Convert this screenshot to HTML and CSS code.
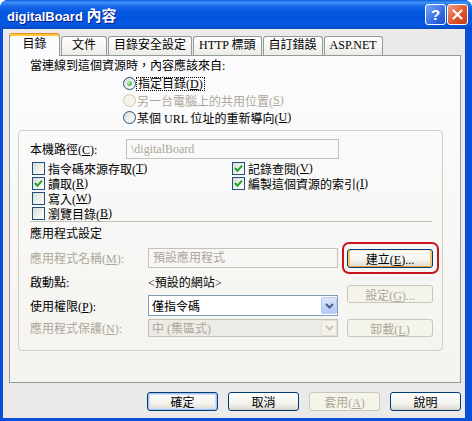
FILE: index.html
```html
<!DOCTYPE html>
<html>
  <head>
    <title>digitalBoard 內容</title>
    <link rel="stylesheet" href="styles.css">
  </head>
  <body>
    <div class="window">
      <div class="titlebar">
        <span class="title">digitalBoard <span class="title-cjk">內容</span></span>
        <div class="caption-btns">
          <span class="cap-btn help">?</span>
          <span class="cap-btn close">
            <svg width="11" height="11" viewBox="0 0 11 11"><path d="M1.5 1.5 L9.5 9.5 M9.5 1.5 L1.5 9.5" stroke="#fff" stroke-width="2.2" stroke-linecap="round"/></svg>
          </span>
        </div>
      </div>

      <div class="client">
        <!-- tabs -->
        <div class="tabs">
          <div class="tab active">目錄</div>
          <div class="tab">文件</div>
          <div class="tab">目錄安全設定</div>
          <div class="tab">HTTP 標頭</div>
          <div class="tab">自訂錯誤</div>
          <div class="tab">ASP.NET</div>
        </div>

        <div class="panel">
          <div class="intro">當連線到這個資源時，內容應該來自:</div>
          <div class="radios">
            <div class="radio-row"><span class="radio on"></span><span class="focus">指定目錄(<u>D</u>)</span></div>
            <div class="radio-row dis"><span class="radio off"></span>另一台電腦上的共用位置(<u>S</u>)</div>
            <div class="radio-row"><span class="radio"></span>某個 URL 位址的重新導向(<u>U</u>)</div>
          </div>

          <!-- local path group -->
          <div class="group">
            <div class="path-row">
              <span class="lbl">本機路徑(<u>C</u>):</span>
              <div class="field dis-field path-field">\digitalBoard</div>
            </div>

            <div class="checks">
              <div class="chk-row"><span class="chk"></span>指令碼來源存取(<u>T</u>)</div>
              <div class="chk-row"><span class="chk"><svg width="9" height="9" viewBox="0 0 9 9"><path d="M1 4 L3.5 6.8 L8 1.6" fill="none" stroke="#21a121" stroke-width="2"/></svg></span>記錄查閱(<u>V</u>)</div>
              <div class="chk-row"><span class="chk"><svg width="9" height="9" viewBox="0 0 9 9"><path d="M1 4 L3.5 6.8 L8 1.6" fill="none" stroke="#21a121" stroke-width="2"/></svg></span>讀取(<u>R</u>)</div>
              <div class="chk-row"><span class="chk"><svg width="9" height="9" viewBox="0 0 9 9"><path d="M1 4 L3.5 6.8 L8 1.6" fill="none" stroke="#21a121" stroke-width="2"/></svg></span>編製這個資源的索引(<u>I</u>)</div>
              <div class="chk-row"><span class="chk"></span>寫入(<u>W</u>)</div>
              <div></div>
              <div class="chk-row"><span class="chk"></span>瀏覽目錄(<u>B</u>)</div>
            </div>

            <div class="sep"></div>
            <div class="section-title">應用程式設定</div>

            <div class="app">
              <div class="app-grid">
                <span class="lbl dis">應用程式名稱(<u>M</u>):</span>
                <div class="field dis-field">預設應用程式</div>

                <span class="lbl">啟動點:</span>
                <span class="lbl">&lt;預設的網站&gt;</span>

                <span class="lbl">使用權限(<u>P</u>):</span>
                <div class="combo">
                  <span>僅指令碼</span>
                  <span class="arrow"><svg width="9" height="6" viewBox="0 0 9 6"><path d="M1 1 L4.5 4.5 L8 1" fill="none" stroke="#4d6185" stroke-width="2"/></svg></span>
                </div>

                <span class="lbl dis">應用程式保護(<u>N</u>):</span>
                <div class="combo dis-combo">
                  <span>中 (集區式)</span>
                  <span class="arrow"><svg width="9" height="6" viewBox="0 0 9 6"><path d="M1 1 L4.5 4.5 L8 1" fill="none" stroke="#c9c7ba" stroke-width="2"/></svg></span>
                </div>
              </div>

              <div class="app-btns">
                <div class="create-wrap"><button class="btn side-btn create">建立(<u>E</u>)...</button></div>
                <button class="btn side-btn set-btn" disabled>設定(<u>G</u>)...</button>
                <button class="btn side-btn unload-btn" disabled>卸載(<u>L</u>)</button>
              </div>
            </div>
          </div>
        </div>

        <div class="footer">
          <button class="btn default">確定</button>
          <button class="btn">取消</button>
          <button class="btn" disabled>套用(<u>A</u>)</button>
          <button class="btn">說明</button>
        </div>
      </div>
    </div>
  </body>
</html>
```

FILE: styles.css
```css
body {
  margin: 0;
  font-family: "Liberation Serif", "Noto Sans CJK TC", serif;
  font-size: 12px;
  color: #000;
}

u {
  text-decoration: underline;
  text-underline-offset: 1px;
}

/* window frame */
.window {
  width: 472px;
  height: 421px;
  background: #0a4fdc;
  border-radius: 8px 8px 0 0;
  display: flex;
  flex-direction: column;
  overflow: hidden;
}

.titlebar {
  height: 29px;
  flex: none;
  display: flex;
  align-items: center;
  justify-content: space-between;
  padding: 0 4px 0 7px;
  background: linear-gradient(#0a5dda 0%, #3e91f7 8%, #2c7ff0 14%, #1565e8 24%, #0558e0 40%, #0255dd 60%, #0458e3 80%, #0553d6 92%, #0849b8 100%);
}

.title {
  color: #fff;
  font-family: "Liberation Sans", "Noto Sans CJK TC", sans-serif;
  font-weight: bold;
  font-size: 13px;
  text-shadow: 1px 1px #0a1883;
}

.title-cjk {
  font-size: 15px;
}

.caption-btns {
  display: flex;
  gap: 1px;
}

.cap-btn {
  width: 21px;
  height: 21px;
  box-sizing: border-box;
  border: 1px solid #fff;
  border-radius: 3px;
  display: flex;
  align-items: center;
  justify-content: center;
  color: #fff;
  font-family: "Liberation Sans", sans-serif;
  font-weight: bold;
  font-size: 15px;
}

.help {
  background: linear-gradient(135deg, #7aa8f8, #2a62e0 70%, #1d4fc6);
}

.close {
  background: linear-gradient(135deg, #f0a085, #e0552c 55%, #c23c14);
}

/* dialog body */
.client {
  flex: 1;
  margin: 0 7px 3px 3px;
  background: #ebe9ea;
  padding: 4px 4px 0 6px;
}

.tabs {
  display: flex;
  align-items: flex-end;
  height: 22px;
  position: relative;
  z-index: 1;
}

.tab {
  height: 19px;
  box-sizing: border-box;
  min-width: 46px;
  padding: 0 5px;
  margin-left: 1px;
  border: 1px solid #919b9c;
  border-bottom: none;
  border-radius: 3px 3px 0 0;
  background: linear-gradient(#ffffff, #ecebe6);
  text-align: center;
  line-height: 17px;
  white-space: nowrap;
}

.tab.active {
  width: 51px;
  height: 23px;
  margin: 0 0 -1px 0;
  border-top-color: #e68b2c;
  box-shadow: inset 0 2px #ffc83c;
  background: #fcfcfe;
  line-height: 20px;
}

.panel {
  height: 328px;
  box-sizing: border-box;
  border: 1px solid #919b9c;
  background: linear-gradient(#fcfcfe, #f4f3ee);
  padding: 3px 17px 0 8px;
}

.intro {
  margin-left: 12px;
  line-height: 14px;
}

.radios {
  margin: 2px 0 0 105px;
}

.radio-row {
  height: 17px;
  display: flex;
  align-items: center;
}

.radio {
  width: 13px;
  height: 13px;
  box-sizing: border-box;
  border: 1px solid #1c5180;
  border-radius: 50%;
  background: linear-gradient(135deg, #dcdcd7, #ffffff);
  margin-right: 1px;
  display: flex;
  align-items: center;
  justify-content: center;
}

.radio.on::after {
  content: "";
  width: 5px;
  height: 5px;
  border-radius: 50%;
  background: radial-gradient(circle at 35% 35%, #b6f0b0, #21a121);
}

.radio.off {
  border-color: #cac8bb;
  background: #f5f4ea;
}

.dis {
  color: #aca899;
}

.focus {
  outline: 1px dotted #000;
  outline-offset: 0;
  padding: 0 1px;
  line-height: 12px;
}

/* group box */
.group {
  margin-top: 4px;
  height: 221px;
  box-sizing: border-box;
  border: 1px solid #d0d0bf;
  border-radius: 4px;
  padding: 8px 9px 0 11px;
}

.path-row {
  display: flex;
  align-items: center;
  height: 20px;
}

.path-row .lbl {
  width: 96px;
}

.field {
  box-sizing: border-box;
  height: 20px;
  border: 1px solid #7f9db9;
  background: #fff;
  padding: 0 4px;
  line-height: 18px;
  white-space: nowrap;
}

.dis-field {
  border-color: #c3c1b8;
  background: transparent;
  color: #aca899;
}

.path-field {
  width: 213px;
}

.checks {
  display: grid;
  grid-template-columns: 200px 1fr;
  grid-auto-rows: 15px;
  margin: 2px 0 0 2px;
}

.chk-row {
  display: flex;
  align-items: center;
}

.chk {
  width: 13px;
  height: 13px;
  box-sizing: border-box;
  border: 1px solid #1c5180;
  background: linear-gradient(135deg, #dcdcd7, #ffffff);
  margin-right: 3px;
  display: flex;
  align-items: center;
  justify-content: center;
}

.sep {
  height: 1px;
  background: #c5c2b8;
  margin-right: 1px;
}

.section-title {
  margin-top: 4px;
  line-height: 16px;
}

.app {
  margin-top: 6px;
  display: flex;
  gap: 9px;
}

.app-grid {
  display: grid;
  grid-template-columns: 118px 190px;
  grid-template-rows: 20px 21px 21px 18px;
  row-gap: 3px;
  align-items: center;
}

.combo {
  box-sizing: border-box;
  height: 21px;
  border: 1px solid #7f9db9;
  background: #fff;
  display: flex;
  align-items: center;
  justify-content: space-between;
  padding-left: 3px;
}

.arrow {
  width: 16px;
  height: 17px;
  box-sizing: border-box;
  border: 1px solid #b9cbf3;
  border-radius: 2px;
  background: linear-gradient(#dbe5fd, #b4c8f6);
  display: flex;
  align-items: center;
  justify-content: center;
}

.dis-combo {
  height: 18px;
  border-color: #c3c1b8;
  background: #ecebe6;
  color: #aca899;
}

.dis-combo .arrow {
  height: 16px;
  border-color: #e2e0d7;
  background: #f3f2ed;
}

/* buttons */
.btn {
  box-sizing: border-box;
  border: 1px solid #003c74;
  border-radius: 3px;
  background: linear-gradient(#ffffff 0%, #f3f3ef 60%, #e4e1d8 88%, #d6d0c5 100%);
  font-family: inherit;
  font-size: 12px;
  color: #000;
  padding: 0;
  text-align: center;
}

.btn:disabled {
  border-color: #c9c7ba;
  background: #f5f4ea;
  color: #aca899;
}

.app-btns {
  display: flex;
  flex-direction: column;
}

.side-btn {
  width: 86px;
  height: 18px;
}

.create-wrap {
  position: relative;
  margin-top: 1px;
}

.create {
  height: 19px;
  box-shadow: inset 2px 0 #f7c76d, inset -2px 0 #f7c76d, inset 0 -1px #e5a13a, inset 0 1px #fff0cf;
}

.create-wrap::after {
  content: "";
  position: absolute;
  left: -5px;
  right: -6px;
  top: -7px;
  bottom: -6px;
  border: 2px solid #c8141e;
  border-radius: 7px;
}

.set-btn {
  margin-top: 17px;
}

.unload-btn {
  margin-top: 16px;
}

.footer {
  display: flex;
  justify-content: flex-end;
  gap: 10px;
  margin-top: 9px;
}

.footer .btn {
  width: 71px;
  height: 19px;
}

.footer .default {
  box-shadow: inset 0 0 0 1px #a8c4f0, inset 0 0 0 2px #cedcf5;
}
```
